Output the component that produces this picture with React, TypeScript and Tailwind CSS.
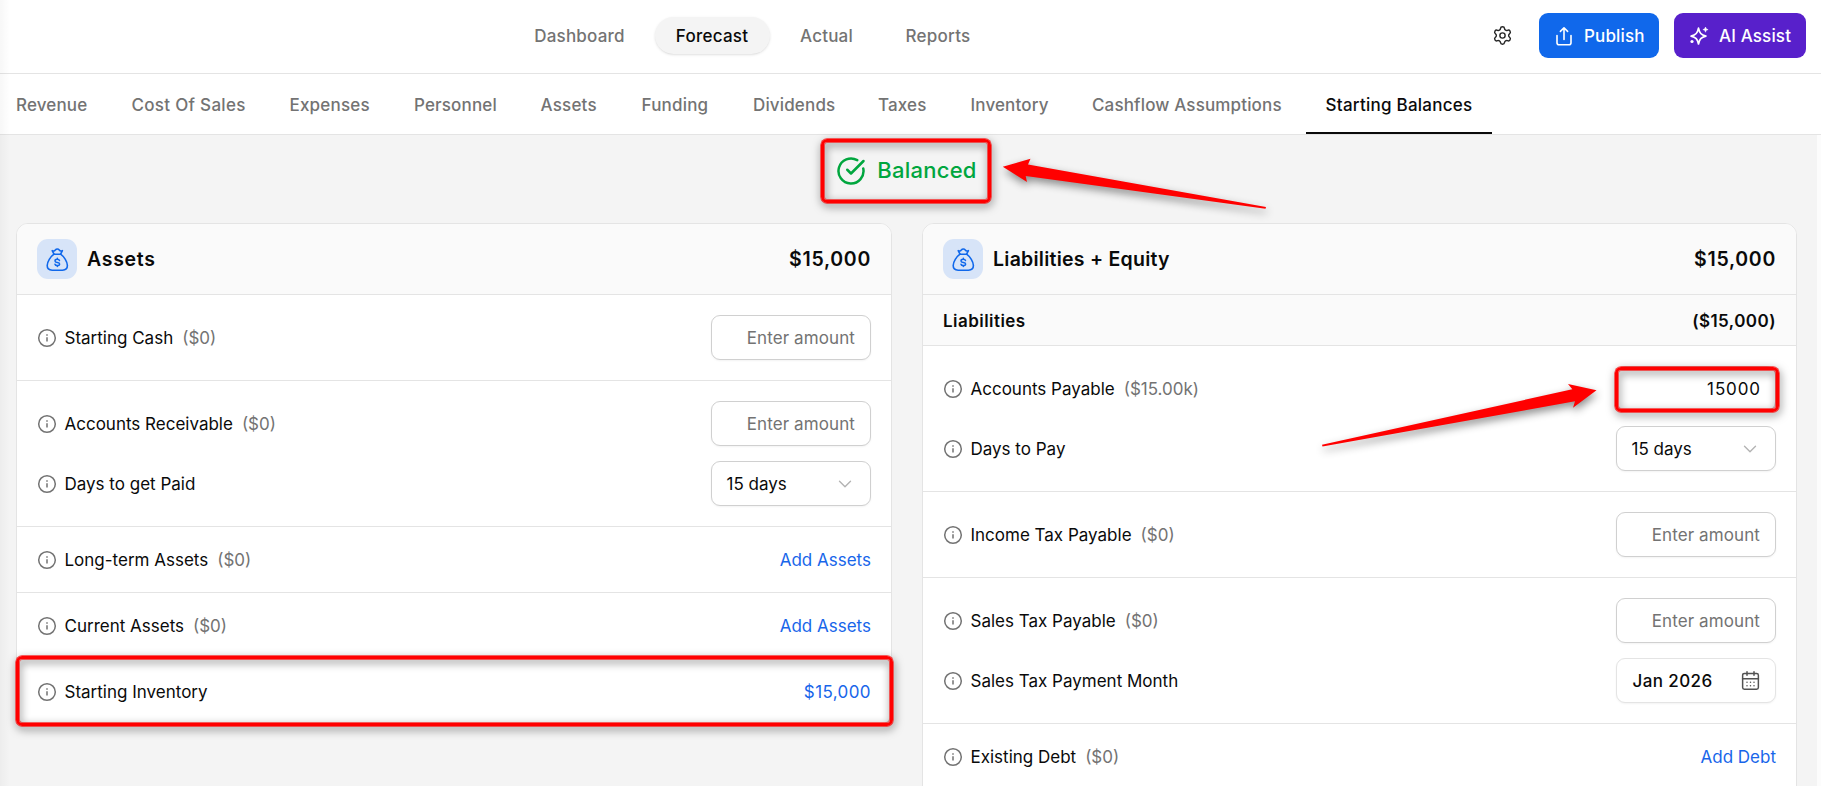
import React from "react";
import clsx from "clsx";
import { CalendarDays, ChevronDown, CircleCheckBig, Settings } from "lucide-react";

const navItems = [
  { label: "Dashboard", style: "w-[134px] tracking-[0.2px]" },
  { label: "Forecast", style: "w-[115px] tracking-[0.25px]", active: true },
  { label: "Actual", style: "w-[98px] tracking-[0.2px]" },
  { label: "Reports", style: "w-[109px] tracking-[0.25px]" },
];

const tabs = [
  { label: "Revenue", style: "w-[115.5px] tracking-[0.15px]" },
  { label: "Cost Of Sales", style: "w-[158px] tracking-[0.3px]" },
  { label: "Expenses", style: "w-[124.5px] tracking-[0.2px]" },
  { label: "Personnel", style: "w-[126.5px] tracking-[0.15px]" },
  { label: "Assets", style: "w-[101px] tracking-[0.2px]" },
  { label: "Funding", style: "w-[111.5px] tracking-[0.2px]" },
  { label: "Dividends", style: "w-[125px] tracking-[0.15px]" },
  { label: "Taxes", style: "w-[92.5px] tracking-[0.15px]" },
  { label: "Inventory", style: "w-[121.5px] tracking-[0.15px]" },
  { label: "Cashflow Assumptions", style: "w-[214px] tracking-[0.15px]" },
];

function InfoIcon() {
  return (
    <svg width="20" height="20" viewBox="0 0 20 20" fill="none" stroke="#737373" strokeWidth="1.5" className="shrink-0">
      <circle cx="10" cy="10" r="8.3" />
      <path d="M10 9.2v4.4M10 6.2v1.6" />
    </svg>
  );
}

function MoneyBagIcon() {
  return (
    <svg width="24" height="24" viewBox="0 0 24 24" fill="none" stroke="#1068eb" strokeWidth="1.6" strokeLinecap="round" strokeLinejoin="round">
      <path d="M9 7.2 7.2 3.6c1.2.6 2.6.3 3.2-.7.9-1.2 2.9-1.2 3.8 0 .6 1 2 1.3 3.2.7L15.6 7.2z" />
      <path d="M9 7.2C5.5 9.6 2.2 14.6 2.2 18.6c0 3.4 1.9 4.6 4.9 4.6h10.4c3 0 4.9-1.2 4.9-4.6 0-4-3.3-9-6.800-11.4" />
      <path d="M14.5 13.6c-.2-.8-1.1-1.3-2.2-1.3-1.3 0-2.3.6-2.3 1.6 0 2.2 4.6.9 4.6 3.1 0 1-1 1.6-2.3 1.6-1.2 0-2.1-.5-2.3-1.3M12.3 11.3v1M12.3 18.600v1" strokeWidth="1.500" />
    </svg>
  );
}

function PublishIcon() {
  return (
    <svg width="18" height="20" viewBox="0 0 18 20" fill="none" stroke="white" strokeWidth="1.6" strokeLinecap="round" strokeLinejoin="round">
      <path d="M2 9.5v7.2c0 1.2.8 2 2 2h10c1.200 0 2-.8 2-2V9.500" />
      <path d="M9 13.500V2M5.400 5.400 9 1.800l3.600 3.600" />
    </svg>
  );
}

function SparkleIcon() {
  return (
    <svg width="20" height="20" viewBox="0 0 20 20" fill="none" stroke="white" strokeWidth="1.7" strokeLinejoin="round">
      <path d="M9.5 2.200c1 4.800 2.600 6.600 7.400 7.900-4.800 1.200-6.400 3-7.400 7.900-1-4.900-2.600-6.700-7.400-7.900 4.800-1.300 6.400-3.100 7.400-7.900z" />
      <path d="M16.500 1c.4 1.700.9 2.200 2.600 2.600-1.700.4-2.200.9-2.600 2.600-.4-1.700-.9-2.200-2.600-2.600 1.700-.4 2.200-.9 2.600-2.600z" fill="white" strokeWidth="0.600" />
      <circle cx="3" cy="15.500" r="1.600" fill="white" stroke="none" />
    </svg>
  );
}

function Highlight({ className }: { className: string }) {
  return (
    <div
      className={clsx(
        "pointer-events-none absolute rounded-md border-[3.5px] border-[#ff0000] shadow-[0_0_0_0.7px_rgba(255,0,0,0.8),inset_0_0_0_1px_rgba(255,0,0,0.6)] drop-shadow-[1px_3px_4px_rgba(0,0,0,0.5)]",
        className
      )}
    />
  );
}

function CardHeader({ title }: { title: string }) {
  return (
    <div className="flex h-[71px] items-center justify-between rounded-t-[11px] bg-[#fafafa] px-5 text-[19.5px] font-semibold">
      <div className="flex items-center gap-[10px]">
        <div className="flex size-10 items-center justify-center rounded-[11px] bg-[#d7e4f8]">
          <MoneyBagIcon />
        </div>
        <span className={title === "Assets" ? "tracking-[0.7px]" : "tracking-[0.25px]"}>{title}</span>
      </div>
      <span className="tracking-[0.7px]">$15,000</span>
    </div>
  );
}

function Row({ label, amount, children }: { label: string; amount?: string; children: React.ReactNode }) {
  return (
    <div className="flex items-center justify-between">
      <div className="flex items-center">
        <InfoIcon />
        <span className="ml-[7.5px]">{label}</span>
        {amount && <span className="ml-[9px] text-[#737373]">{amount}</span>}
      </div>
      {children}
    </div>
  );
}

function AmountInput({ value }: { value?: string }) {
  return (
    <input
      type="text"
      placeholder="Enter amount"
      defaultValue={value}
      className={clsx(
        "block h-[45px] w-40 rounded-[9px] border border-[#d0d0d0] bg-white text-right shadow-xs placeholder:text-[#737373]",
        value ? "px-[14px] tracking-[0.9px]" : "px-[15px] tracking-[0.1px]"
      )}
    />
  );
}

function DaysSelect() {
  return (
    <button className="flex h-[45px] w-40 items-center justify-between rounded-[9px] border border-[#d0d0d0] bg-white pr-[14px] pl-[14.5px] shadow-xs">
      15 days
      <ChevronDown size={22} strokeWidth={1.5} color="#b3b3b3" />
    </button>
  );
}

function LinkButton({ children }: { children: React.ReactNode }) {
  return <button className="text-[#1866ea]">{children}</button>;
}

export default function App() {
  return (
    <div className="relative h-[786px] w-[1821px] overflow-hidden bg-[#f4f4f4] font-[Inter,sans-serif] text-[17px] leading-6 text-[#0a0a0a]">
      {/* Top navigation */}
      <header className="flex h-[74px] items-center justify-between border-b border-[#e4e4e4] bg-white pr-[15px] pb-0.5 pl-[512.5px]">
        <nav className="flex gap-2 font-[450]">
          {navItems.map((item) => (
            <button
              key={item.label}
              className={clsx(
                "h-[37px] rounded-full pt-px",
                item.style,
                item.active ? "bg-[#f4f4f4] shadow-sm" : "text-[#737373]"
              )}
            >
              {item.label}
            </button>
          ))}
        </nav>
        <div className="flex items-center gap-[15px] font-medium text-white">
          <Settings size={21} strokeWidth={1.6} color="#262626" className="mr-[11px]" />
          <button className="flex h-[45px] w-[120px] items-center gap-[11px] rounded-[9px] bg-[#1068eb] pl-4">
            <PublishIcon />
            <span className="tracking-[0.15px]">Publish</span>
          </button>
          <button className="flex h-[45px] w-[132px] items-center gap-[10px] rounded-[9px] bg-[#5820cb] pl-[15px]">
            <SparkleIcon />
            <span className="tracking-[0.15px]">AI Assist</span>
          </button>
        </div>
      </header>

      {/* Forecast tabs */}
      <div className="flex h-[61px] border-b border-[#e4e4e4] bg-white pl-4 text-left font-[450] text-[#737373]">
        {tabs.map((tab) => (
          <button key={tab.label} className={clsx("shrink-0 pt-0.5 text-left whitespace-nowrap", tab.style)}>
            {tab.label}
          </button>
        ))}
        <button className="w-[186px] shrink-0 border-b-2 border-[#0a0a0a] pt-1 tracking-[0.25px] text-[#0a0a0a]">
          Starting Balances
        </button>
      </div>

      <main className="w-[1817px] pr-5 pl-4">
        <div className="mb-4 flex h-[72px] items-center justify-center">
          <div className="relative flex items-center gap-[11px] text-[22px] font-[450] tracking-[0.25px] text-[#00a63e]">
            <CircleCheckBig size={30} strokeWidth={2} />
            <span className="pb-0.5">Balanced</span>
            <Highlight className="-right-[14px] -left-[15px] -top-[17px] -bottom-[17px]" />
          </div>
        </div>

        <div className="grid grid-cols-[876px_875px] items-start justify-between">
          {/* Assets */}
          <section className="divide-y divide-[#e4e4e4] rounded-xl border border-[#e4e4e4] bg-white">
            <CardHeader title="Assets" />
            <div className="p-5">
              <Row label="Starting Cash" amount="($0)">
                <AmountInput />
              </Row>
            </div>
            <div className="flex flex-col gap-[15px] p-5">
              <Row label="Accounts Receivable" amount="($0)">
                <AmountInput />
              </Row>
              <Row label="Days to get Paid">
                <DaysSelect />
              </Row>
            </div>
            <div className="h-[66px] px-5 py-[21px]">
              <Row label="Long-term Assets" amount="($0)">
                <LinkButton>Add Assets</LinkButton>
              </Row>
            </div>
            <div className="h-[66px] px-5 py-[21px]">
              <Row label="Current Assets" amount="($0)">
                <LinkButton>Add Assets</LinkButton>
              </Row>
            </div>
            <div className="relative h-[65px] px-5 py-[21px]">
              <Row label="Starting Inventory">
                <LinkButton>
                  <span className="tracking-[0.4px]">$15,000</span>
                </LinkButton>
              </Row>
              <Highlight className="-right-[1.5px] -left-px -top-[3.5px] -bottom-[2px]" />
            </div>
          </section>

          {/* Liabilities + Equity */}
          <section className="divide-y divide-[#e4e4e4] rounded-xl border border-[#e4e4e4] bg-white">
            <CardHeader title="Liabilities + Equity" />
            <div className="flex h-[51px] items-center justify-between bg-[#fafafa] px-5 pt-0.5 font-semibold tracking-[0.45px]">
              <span>Liabilities</span>
              <span>($15,000)</span>
            </div>
            <div className="flex flex-col gap-[15px] p-5">
              <Row label="Accounts Payable" amount="($15.00k)">
                <div className="relative">
                  <AmountInput value="15000" />
                  <Highlight className="-right-[3px] -left-px top-px -bottom-px" />
                </div>
              </Row>
              <Row label="Days to Pay">
                <DaysSelect />
              </Row>
            </div>
            <div className="p-5">
              <Row label="Income Tax Payable" amount="($0)">
                <AmountInput />
              </Row>
            </div>
            <div className="flex flex-col gap-[15px] p-5">
              <Row label="Sales Tax Payable" amount="($0)">
                <AmountInput />
              </Row>
              <Row label="Sales Tax Payment Month">
                <button className="flex h-[45px] w-40 items-center justify-between rounded-[9px] border border-[#e4e4e4] bg-white pr-[14px] pl-[15.5px] font-[450] tracking-[0.4px] shadow-xs">
                  Jan 2026
                  <CalendarDays size={21} strokeWidth={1.7} color="#525252" />
                </button>
              </Row>
            </div>
            <div className="h-[90px] px-5 py-[21px]">
              <Row label="Existing Debt" amount="($0)">
                <LinkButton>Add Debt</LinkButton>
              </Row>
            </div>
          </section>
        </div>
      </main>

      {/* Sidebar shadow and scrollbar track */}
      <div className="absolute inset-y-0 left-0 w-[10px] bg-linear-to-r from-black/[0.03] to-transparent" />
      <div className="absolute top-[135px] right-0 bottom-0 w-1 bg-[#fcfcfc]" />

      {/* Callout arrows */}
      <svg
        className="pointer-events-none absolute inset-0 drop-shadow-[1px_4px_4px_rgba(0,0,0,0.45)]"
        width="1821"
        height="786"
        fill="#ff0000"
      >
        <path d="M1002.8 166.7 1030.5 158.8 1028 164.5 1266 207 1265.5 208.7 1025.7 176 1027 182z" />
        <path d="M1596.5 390.3 1568 384 1572.3 389.3 1322 444.8 1322.5 446.4 1575 401.3 1573 407.7z" />
      </svg>
    </div>
  );
}
